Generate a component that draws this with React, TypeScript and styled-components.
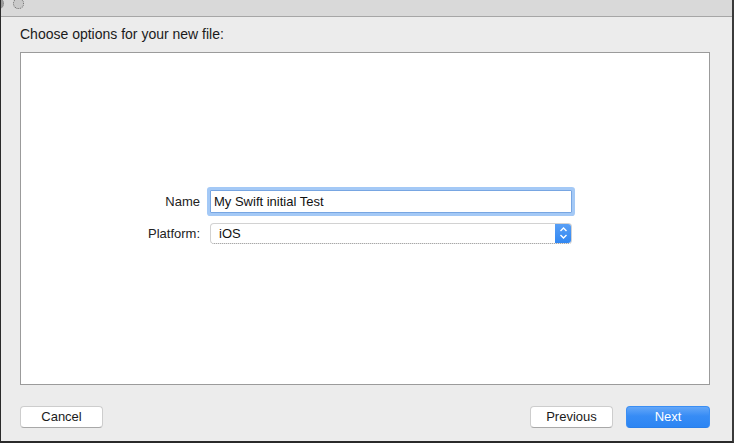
import React from "react";
import styled, { createGlobalStyle } from "styled-components";

const Global = createGlobalStyle`
  html, body { margin: 0; padding: 0; background: #ececec; }
  body { font-family: "Liberation Sans", Arial, sans-serif; }
  * { box-sizing: border-box; }
`;

const Window = styled.div`
  width: 734px;
  height: 443px;
  display: flex;
  flex-direction: column;
  background: #ececec;
  border-left: 1px solid #2a2a2a;
  border-right: 2px solid #3a3a3a;
  border-bottom: 2px solid #2a2a2a;
  overflow: hidden;
`;

const TitleStrip = styled.div`
  height: 17px;
  flex: none;
  display: flex;
  align-items: flex-start;
  gap: 9px;
  background: #d9d9d9;
  border-bottom: 1px solid #a6a6a6;
`;

const Dot = styled.span<{ $partial?: boolean }>`
  display: block;
  width: 11px;
  height: 11px;
  margin-top: -2px;
  border-radius: 50%;
  background: ${(p) => (p.$partial ? "#9a9a9a" : "#c9c9c9")};
  border: 1px dotted ${(p) => (p.$partial ? "#8a8a8a" : "#6e6e6e")};
  margin-left: ${(p) => (p.$partial ? "-8px" : "0")};
`;

const Body = styled.div`
  flex: 1;
  display: flex;
  flex-direction: column;
  padding: 0 22px 13px 19px;
`;

const Heading = styled.div`
  height: 35px;
  flex: none;
  padding-top: 9px;
  font-size: 14px;
  line-height: 17px;
  color: #1a1a1a;
`;

const Panel = styled.div`
  flex: 1;
  display: flex;
  align-items: center;
  background: #ffffff;
  border: 1px solid #9b9b9b;
`;

const Form = styled.div`
  display: grid;
  grid-template-columns: 74px 362px;
  column-gap: 10px;
  row-gap: 10px;
  margin-left: 105px;
  margin-top: -4px;
  align-items: center;
`;

const Label = styled.label`
  text-align: right;
  font-size: 13px;
  color: #222;
  white-space: nowrap;
`;

const TextField = styled.div`
  height: 23px;
  border: 1px solid #78a6e2;
  box-shadow: 0 0 0 3px #a4c9f6;
  border-radius: 1px;
  background: #fff;
  padding-left: 3px;
  font-size: 13px;
  line-height: 21px;
  color: #111;
`;

const Popup = styled.div`
  height: 21px;
  display: flex;
  border: 1px solid #d2d2d2;
  border-bottom: 1px dotted #8c8c8c;
  border-radius: 4px;
  background: #fff;
  overflow: hidden;
`;

const PopupText = styled.div`
  flex: 1;
  padding-left: 8px;
  font-size: 13px;
  line-height: 19px;
  color: #111;
`;

const Stepper = styled.div`
  width: 17px;
  margin: -1px -1px -1px 0;
  background: linear-gradient(#5aa0f6, #2f86f2);
  border-radius: 0 4px 4px 0;
  display: flex;
  align-items: center;
  justify-content: center;
`;

const Footer = styled.div`
  flex: none;
  margin-top: 21px;
  height: 22px;
  display: flex;
  align-items: center;
  gap: 13px;
`;

const Spacer = styled.div`
  flex: 1;
`;

const Button = styled.button<{ $primary?: boolean }>`
  width: ${(p) => (p.$primary ? "84px" : "83px")};
  height: 22px;
  padding: 0;
  border-radius: 4px;
  font-family: "Liberation Sans", Arial, sans-serif;
  font-size: 13px;
  line-height: 20px;
  cursor: default;
  border: 1px solid ${(p) => (p.$primary ? "#3a8ef4" : "#cdcdcd")};
  border-bottom-color: ${(p) => (p.$primary ? "#2a7ee8" : "#a8a8a8")};
  background: ${(p) =>
    p.$primary ? "linear-gradient(#64a7f8, #378cf5 45%, #2c85f3)" : "#ffffff"};
  color: ${(p) => (p.$primary ? "#ffffff" : "#1a1a1a")};
`;

export default function App() {
  return (
    <>
      <Global />
      <Window>
        <TitleStrip>
          <Dot $partial />
          <Dot />
        </TitleStrip>
        <Body>
          <Heading>Choose options for your new file:</Heading>
          <Panel>
            <Form>
              <Label>Name</Label>
              <TextField>My Swift initial Test</TextField>
              <Label>Platform:</Label>
              <Popup>
                <PopupText>iOS</PopupText>
                <Stepper>
                  <svg width="9" height="14" viewBox="0 0 9 14">
                    <path
                      d="M1.5 5 L4.5 2 L7.5 5 M1.5 9 L4.5 12 L7.5 9"
                      fill="none"
                      stroke="#ffffff"
                      strokeWidth="1.4"
                    />
                  </svg>
                </Stepper>
              </Popup>
            </Form>
          </Panel>
          <Footer>
            <Button>Cancel</Button>
            <Spacer />
            <Button>Previous</Button>
            <Button $primary>Next</Button>
          </Footer>
        </Body>
      </Window>
    </>
  );
}
